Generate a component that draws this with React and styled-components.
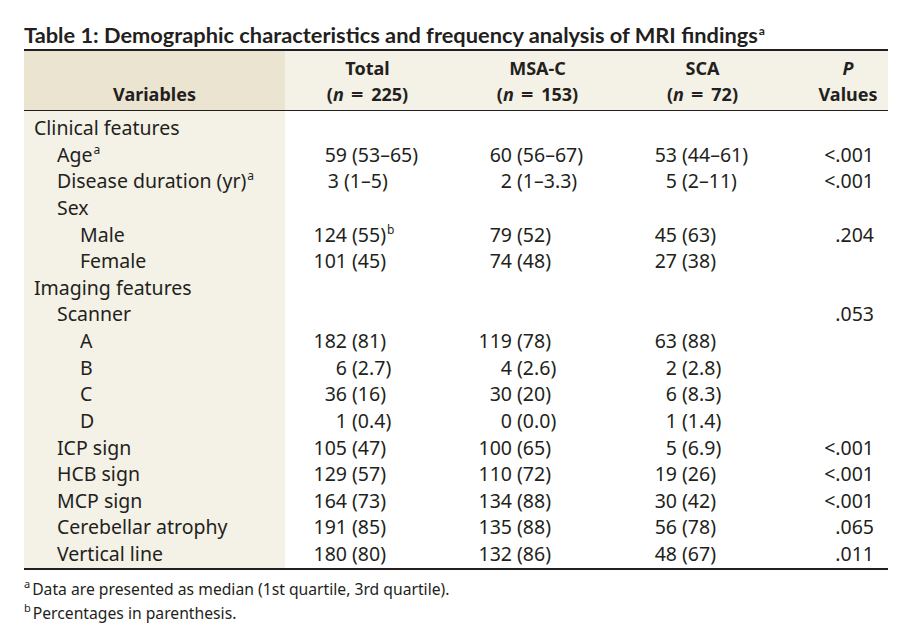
import React from 'react'
import styled, { createGlobalStyle, css } from 'styled-components'

const GlobalStyle = createGlobalStyle`
	html, body {
		margin: 0;
		padding: 0;
		background: #fff;
	}
	body {
		font-family: "Noto Sans", "Open Sans", sans-serif;
		color: #231f20;
	}
`

const Page = styled.div`
	width: 906px;
	height: 636px;
	padding: 21px 0 0 24px;
	box-sizing: border-box;
	display: flex;
	flex-direction: column;
`

const Title = styled.div`
	font-family: Lato, "Noto Sans", sans-serif;
	font-size: 21.8px;
	font-weight: 700;
	line-height: 28px;
	height: 28px;
	white-space: nowrap;
`

const Table = styled.div`
	width: 864px;
	border-top: 2px solid #231f20;
	border-bottom: 2px solid #231f20;
	display: flex;
	flex-direction: column;
`

const Row = styled.div`
	display: grid;
	grid-template-columns: 261px 165px 175px 155px 108px;
	font-size: 19.5px;
	line-height: 26.62px;
`

const HeadRow = styled(Row)`
	border-bottom: 1.5px solid #231f20;
	font-size: 18px;
	font-weight: 700;
	line-height: 26px;
`

const HeadCell = styled.div`
	background: #f4f1e6;
	padding: 4px 0 3px;
	display: flex;
	flex-direction: column;
	justify-content: flex-end;
	align-items: center;
	text-align: center;

	${props => props.$shade && css`
		background: #ebe4d1;
	`}

	${props => props.$padLeft && css`
		padding-left: ${props.$padLeft}px;
	`}
`

const Italic = styled.i`
	font-style: italic;
`

const Eq = styled.span`
	display: inline-block;
	margin: 0 9px 0 8px;
	transform: scaleX(1.2);
`

const LabelCell = styled.div`
	background: #f4f1e6;
	padding-left: ${props => 10 + props.$level * 23}px;
	white-space: nowrap;
	${props => props.$first && css`padding-top: 4px;`}
`

const DataCell = styled.div`
	display: flex;
	padding-left: ${props => props.$offset}px;
	white-space: nowrap;
	${props => props.$first && css`padding-top: 4px;`}
`

const NumBox = styled.span`
	display: inline-block;
	width: 40px;
	text-align: right;
	margin-right: 5px;
`

const PCell = styled.div`
	text-align: right;
	padding-right: 14px;
	${props => props.$first && css`padding-top: 4px;`}
`

const Sup = styled.sup`
	font-size: 12px;
	line-height: 0;
	vertical-align: 0;
	position: relative;
	top: -8px;
	margin-left: 1px;
`

const Notes = styled.div`
	margin-top: 7px;
	font-size: 15.7px;
	line-height: 24px;
`

const Note = styled.div`
	white-space: nowrap;
`

const NoteMark = styled.sup`
	font-size: 11px;
	line-height: 0;
	vertical-align: 0;
	position: relative;
	top: -7px;
	margin-right: 2px;
`

const offsets = [22, 22, 12]

const rows = [
	{ label: 'Clinical features', level: 0 },
	{ label: 'Age', sup: 'a', level: 1, vals: ['59|(53–65)', '60|(56–67)', '53|(44–61)'], p: '<.001' },
	{ label: 'Disease duration (yr)', sup: 'a', level: 1, vals: ['3|(1–5)', '2|(1–3.3)', '5|(2–11)'], p: '<.001', shift: true },
	{ label: 'Sex', level: 1 },
	{ label: 'Male', level: 2, vals: ['124|(55)|b', '79|(52)', '45|(63)'], p: '.204' },
	{ label: 'Female', level: 2, vals: ['101|(45)', '74|(48)', '27|(38)'] },
	{ label: 'Imaging features', level: 0 },
	{ label: 'Scanner', level: 1, p: '.053' },
	{ label: 'A', level: 2, vals: ['182|(81)', '119|(78)', '63|(88)'] },
	{ label: 'B', level: 2, vals: ['6|(2.7)', '4|(2.6)', '2|(2.8)'] },
	{ label: 'C', level: 2, vals: ['36|(16)', '30|(20)', '6|(8.3)'] },
	{ label: 'D', level: 2, vals: ['1|(0.4)', '0|(0.0)', '1|(1.4)'] },
	{ label: 'ICP sign', level: 1, vals: ['105|(47)', '100|(65)', '5|(6.9)'], p: '<.001' },
	{ label: 'HCB sign', level: 1, vals: ['129|(57)', '110|(72)', '19|(26)'], p: '<.001' },
	{ label: 'MCP sign', level: 1, vals: ['164|(73)', '134|(88)', '30|(42)'], p: '<.001' },
	{ label: 'Cerebellar atrophy', level: 1, vals: ['191|(85)', '135|(88)', '56|(78)'], p: '.065' },
	{ label: 'Vertical line', level: 1, vals: ['180|(80)', '132|(86)', '48|(67)'], p: '.011' },
]

function Value({ text }) {
	if (!text) return null
	const [num, rest, sup] = text.split('|')
	return (
		<>
			<NumBox>{ num }</NumBox>
			<span>{ rest }{ sup && <Sup>{ sup }</Sup> }</span>
		</>
	)
}

function Count({ n }) {
	return <div>(<Italic>n</Italic><Eq>=</Eq>{ n })</div>
}

export default function App() {
	return (
		<Page>
			<GlobalStyle />
			<Title>
				Table 1: Demographic characteristics and frequency analysis of MRI findings<Sup>a</Sup>
			</Title>
			<Table>
				<HeadRow>
					<HeadCell $shade>Variables</HeadCell>
					<HeadCell>
						<div>Total</div>
						<Count n={ 225 } />
					</HeadCell>
					<HeadCell>
						<div>MSA-C</div>
						<Count n={ 153 } />
					</HeadCell>
					<HeadCell>
						<div>SCA</div>
						<Count n={ 72 } />
					</HeadCell>
					<HeadCell $padLeft={ 28 }>
						<div><Italic>P</Italic></div>
						<div>Values</div>
					</HeadCell>
				</HeadRow>
				{
					rows.map((row, i) => (
						<Row key={ row.label }>
							<LabelCell $level={ row.level } $first={ i === 0 }>
								{ row.label }{ row.sup && <Sup>{ row.sup }</Sup> }
							</LabelCell>
							{
								offsets.map((off, c) => (
									<DataCell key={ c } $first={ i === 0 } $offset={ row.shift && c === 0 ? off - 8 : off }>
										<Value text={ row.vals && row.vals[c] } />
									</DataCell>
								))
							}
							<PCell $first={ i === 0 }>{ row.p }</PCell>
						</Row>
					))
				}
			</Table>
			<Notes>
				<Note><NoteMark>a</NoteMark>Data are presented as median (1st quartile, 3rd quartile).</Note>
				<Note><NoteMark>b</NoteMark>Percentages in parenthesis.</Note>
			</Notes>
		</Page>
	)
}
